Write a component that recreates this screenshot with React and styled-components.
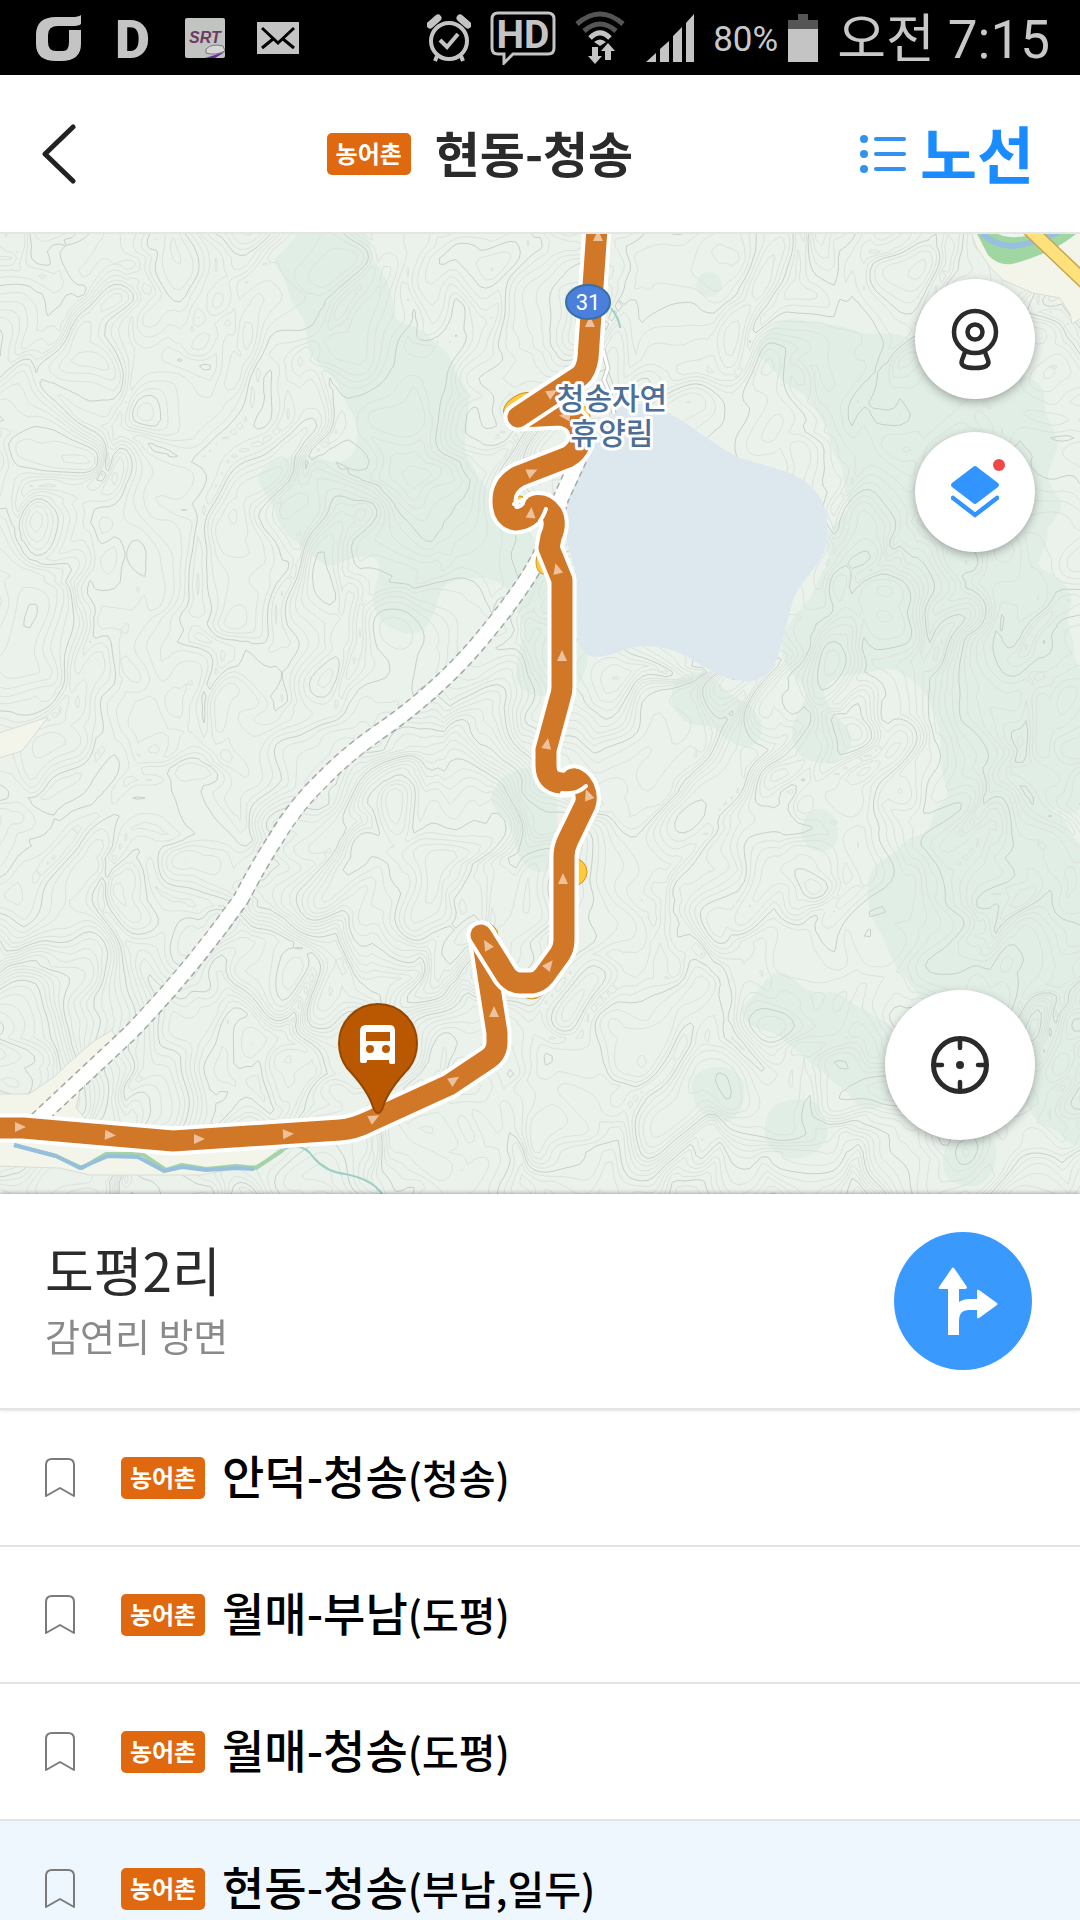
import React, { useMemo } from 'react'
import styled, { createGlobalStyle } from 'styled-components'

const GlobalStyle = createGlobalStyle`
  * {
    box-sizing: border-box;
  }
  body {
    margin: 0;
    background: #fff;
    color: #2b2b2b;
    font-family: 'Noto Sans CJK KR', sans-serif;
  }
  button {
    border: 0;
    padding: 0;
    background: none;
    color: inherit;
    font: inherit;
    cursor: pointer;
  }
  svg {
    display: block;
    flex-shrink: 0;
  }
`

/* ---------- terrain ---------- */

const MAP_W = 1080
const MAP_H = 960
const STEP = 6

const hash = (x, y) => {
  let n = Math.imul(x, 374761393) + Math.imul(y, 668265263) + 1274126177
  n = Math.imul(n ^ (n >>> 13), 1274126177)
  return ((n ^ (n >>> 16)) >>> 0) / 4294967295
}

const noise = (x, y) => {
  const xi = Math.floor(x)
  const yi = Math.floor(y)
  const u = (x - xi) ** 2 * (3 - 2 * (x - xi))
  const v = (y - yi) ** 2 * (3 - 2 * (y - yi))
  const top = hash(xi, yi) * (1 - u) + hash(xi + 1, yi) * u
  const bottom = hash(xi, yi + 1) * (1 - u) + hash(xi + 1, yi + 1) * u
  return (top * (1 - v) + bottom * v) * 2 - 1
}

// wooded zones: x, y, radius
const woods = [
  [330, 20, 60], [350, 80, 50], [380, 140, 50], [430, 170, 50], [410, 220, 45],
  [300, 250, 45], [330, 290, 40], [420, 290, 55], [480, 310, 50], [400, 370, 40],
  [545, 360, 45], [545, 430, 40], [520, 560, 45], [540, 610, 28], [710, 50, 16],
  [790, 110, 40], [850, 140, 60], [920, 180, 70], [1000, 200, 70], [900, 260, 70],
  [990, 320, 80], [860, 350, 55], [950, 410, 60], [830, 410, 45], [700, 460, 35],
  [740, 490, 30], [820, 500, 40], [1040, 420, 60], [1000, 500, 60], [1060, 520, 60],
  [820, 600, 30], [900, 660, 40], [970, 640, 70], [1050, 640, 60], [940, 720, 50],
  [1040, 740, 60], [780, 770, 40], [830, 800, 35], [880, 830, 50], [1060, 850, 60],
  [790, 900, 40], [720, 860, 30], [970, 930, 45],
]

// broad slopes with sharp spurs running across them
const elevation = (x, y) => {
  const wx = x + 16 * noise(x / 46, y / 46 + 9)
  const wy = y + 16 * noise(x / 46 + 31, y / 46)
  const slope = noise(wx / 210 + 3, wy / 210 + 5)
  const spurs = 1 - Math.abs(noise((wx + wy * 0.6) / 52 + 11, (wy - wx * 0.6) / 84))
  const gullies = 1 - Math.abs(noise(wx / 36 + 40, wy / 36 + 7))
  return slope + spurs * 0.42 + gullies * 0.14
}

const woodsAt = (x, y) => {
  let sum = 0
  woods.forEach(([cx, cy, r]) => {
    const d = ((x - cx) ** 2 + (y - cy) ** 2) / (r * r)
    if (d < 5) sum += Math.exp(-d * 1.2)
  })
  return sum
}

function buildTerrain() {
  const cols = MAP_W / STEP + 1
  const rows = MAP_H / STEP + 1
  const h = []
  const g = []
  for (let j = 0; j < rows; j++) {
    for (let i = 0; i < cols; i++) {
      const x = i * STEP
      const y = j * STEP
      const e = elevation(x, y)
      h.push(e)
      g.push(woodsAt(x, y) - 0.5 + noise(x / 30, y / 30) * 0.16 + noise(x / 60 + 8, y / 60) * 0.2)
    }
  }

  const thin = []
  const thick = []
  const green = []
  const gap = 0.06
  const f = (n) => Math.round(n * 10) / 10

  for (let j = 0; j < rows - 1; j++) {
    for (let i = 0; i < cols - 1; i++) {
      const k = j * cols + i
      const idx = [k, k + 1, k + cols + 1, k + cols]
      const px = [i, i + 1, i + 1, i].map((n) => n * STEP)
      const py = [j, j, j + 1, j + 1].map((n) => n * STEP)
      const v = idx.map((n) => h[n])
      const w = idx.map((n) => g[n])

      const from = Math.ceil(Math.min(...v) / gap)
      const to = Math.floor(Math.max(...v) / gap)
      for (let l = from; l <= to; l++) {
        const level = l * gap
        const pts = []
        for (let a = 0; a < 4; a++) {
          const b = (a + 1) % 4
          if (v[a] < level !== v[b] < level) {
            const t = (level - v[a]) / (v[b] - v[a])
            pts.push(`${f(px[a] + (px[b] - px[a]) * t)} ${f(py[a] + (py[b] - py[a]) * t)}`)
          }
        }
        const out = l % 5 === 0 ? thick : thin
        for (let p = 0; p + 1 < pts.length; p += 2) out.push(`M${pts[p]}L${pts[p + 1]}`)
      }

      const poly = []
      for (let a = 0; a < 4; a++) {
        const b = (a + 1) % 4
        if (w[a] > 0) poly.push(`${px[a]} ${py[a]}`)
        if (w[a] > 0 !== w[b] > 0) {
          const t = w[a] / (w[a] - w[b])
          poly.push(`${f(px[a] + (px[b] - px[a]) * t)} ${f(py[a] + (py[b] - py[a]) * t)}`)
        }
      }
      if (poly.length > 2) green.push(`M${poly.join('L')}Z`)
    }
  }
  return { thin: thin.join(''), thick: thick.join(''), green: green.join('') }
}

/* ---------- map ---------- */

const route = [
  'M-20 893L0 894L23 894L173 907L340 896Q354 895 368 888L449 851L488 825Q497 819 497 808L497 799L482 703',
  'M481 701L506 741Q512 749 520 749L532 749Q539 748 544 742L560 720Q564 714 564 706L564 623Q564 614 568 606L585 571Q588 563 584 554Q580 546 573 545',
  'M575 545Q569 550 561 549Q546 548 546 531L546 516L560 464Q562 458 562 453L562 346L549 314L551 303Q557 290 552 280Q545 270 535 272',
  'M537 272Q529 285 516 286Q503 284 503 267Q503 250 519 242L568 223Q580 216 581 203Q580 184 560 181L520 183',
  'M518 183L580 142Q586 137 588 124L598 -20',
]

const arrows = [
  [20, 893, 90], [110, 901, 94], [199, 905, 90], [288, 900, 87], [374, 884, 62],
  [454, 846, 58], [494, 778, 0], [487, 711, -30], [549, 731, 38], [563, 645, 0],
  [588, 561, -20], [547, 510, 10], [562, 422, 0], [557, 335, -15], [531, 279, 5],
  [532, 238, 65], [565, 182, -85], [552, 159, 60], [590, 88, 0], [598, 2, 0],
]

const road =
  'M37 886L130 799Q190 737 241 665Q258 632 275 606Q296 570 324 544Q345 522 376 500Q432 462 475 413Q524 355 540 322Q552 295 561 264L579 225'

const lake =
  'M600 196C590 215 581 225 577 238C566 260 565 285 567 309Q577 335 577 360L578 405Q582 422 595 423C613 423 625 412 645 412C680 413 690 426 710 436Q728 447 747 447C765 447 775 434 779 418L792 370C797 348 820 335 826 312Q830 285 822 267Q812 248 787 238L737 223C710 208 690 190 667 178Q640 164 618 174Z'

function MapDrawing() {
  const terrain = useMemo(buildTerrain, [])

  return (
    <MapSvg viewBox={`0 0 ${MAP_W} ${MAP_H}`} preserveAspectRatio="xMidYMid slice" aria-hidden="true">
      <rect width={MAP_W} height={MAP_H} fill="#ebf2ec" />
      <path d={terrain.green} fill="#e1eee6" stroke="#e1eee6" strokeWidth="1" />
      <path d={terrain.thin} fill="none" stroke="#dce2dd" strokeWidth="1" />
      <path d={terrain.thick} fill="none" stroke="#c8d0ca" strokeWidth="1" />
      <g fill="#f4f5ea" stroke="#d9ddd3" strokeWidth="1">
        <path d="M-4 860L29 860L54 843L72 826L93 808L112 796L116 804L80 856L76 874L90 890L290 905L262 930L200 941L90 941L60 934L-4 932Z" />
        <path d="M-4 500L48 483L22 517L-4 525Z" />
        <path d="M970 -4L977 14L990 33L1003 46L1033 59L1060 64L1070 80L1072 90L1084 82V-4Z" />
      </g>

      {/* river at the bottom left */}
      <path
        d="M14 911L56 922L82 934L106 920L142 920L166 936L182 931L206 935L236 932L256 934L283 916"
        fill="none" stroke="#a3d3a8" strokeWidth="4" strokeLinejoin="round"
      />
      <path
        d="M14 911L56 922L80 934L108 922L138 923L164 937L182 933L206 936L236 934L254 935"
        fill="none" stroke="#95bfdc" strokeWidth="4" strokeLinejoin="round"
      />
      <path
        d="M283 916Q302 906 314 924Q326 938 345 940Q372 945 382 960"
        fill="none" stroke="#9ccfc5" strokeWidth="2"
      />

      {/* river bank and highway at the top right */}
      <path d="M977 0L988 21Q998 32 1012 30Q1044 22 1068 6L1076 0Z" fill="#a0d6a1" />
      <path d="M998 0Q1008 5 1026 2L1032 0Z" fill="#eef5ea" />
      <path d="M982 0Q996 12 1014 12Q1040 8 1058 -2" fill="none" stroke="#99bfe0" strokeWidth="6" />
      <path d="M1026 -8L1090 53" stroke="#c9a64e" strokeWidth="15" />
      <path d="M1026 -8L1090 53" stroke="#ffe17c" strokeWidth="12" />

      <path d={lake} fill="#dce8ee" />
      <path d="M603 116L608 134L604 146L610 160L614 180" fill="none" stroke="#c4c9c6" strokeWidth="5" />
      <path d="M603 116L608 134L604 146L610 160L614 180" fill="none" stroke="#fff" strokeWidth="3" />
      <path d="M611 74Q620 86 620 94" fill="none" stroke="#9ccfc5" strokeWidth="2" />

      <path d={road} fill="none" stroke="#a5aaa6" strokeWidth="17" strokeDasharray="6 4" />
      <path d={road} fill="none" stroke="#fff" strokeWidth="14" />

      <g fill="#ffc83d" stroke="#c99a22" strokeWidth="1">
        <circle cx="573" cy="638" r="14" />
        <ellipse cx="520" cy="171" rx="18" ry="10" transform="rotate(-30 520 171)" />
        <circle cx="520" cy="266" r="4" />
        <ellipse cx="543" cy="328" rx="7" ry="12" />
        <circle cx="532" cy="752" r="13" />
        <circle cx="555" cy="731" r="12" />
        <circle cx="485" cy="702" r="13" />
        <circle cx="579" cy="182" r="11" />
      </g>

      {route.map((d) => (
        <path key={d} d={d} fill="none" stroke="#fff" strokeWidth="29" strokeLinecap="round" strokeLinejoin="round" />
      ))}
      {route.map((d, i) => (
        <g key={d} fill="none" strokeLinecap="round" strokeLinejoin="round">
          {(i === 1 || i === 4) && <path d={d} stroke="#fff" strokeWidth="29" />}
          <path d={d} stroke="#d07728" strokeWidth="21" />
        </g>
      ))}
      <path d="M562 559Q577 561 586 552" fill="none" stroke="#fff" strokeWidth="4" strokeLinecap="round" />
      <path d="M541 293L540 287Q544 281 546 275" fill="none" stroke="#fff" strokeWidth="4" strokeLinecap="round" />
      <path d="M514 270L522 266" fill="none" stroke="#fff" strokeWidth="4" strokeLinecap="round" />

      {arrows.map(([x, y, turn]) => (
        <path
          key={`${x}-${y}`}
          d="M0 -6L5 5L-5 5Z"
          fill="#ecc19c"
          transform={`translate(${x} ${y}) rotate(${turn})`}
        />
      ))}

      <ellipse cx="588" cy="68" rx="22" ry="17" fill="#4a80dc" stroke="#3a6ea6" strokeWidth="2" />
      <RoadNumber x="588" y="76">31</RoadNumber>

      <PlaceName>
        <tspan x="612" y="175">청송자연</tspan>
        <tspan x="612" y="210">휴양림</tspan>
      </PlaceName>

      {/* bus stop pin */}
      <path
        d="M378 879Q375 879 373 873Q368 856 347 834Q339 823 339 809A39 39 0 0 1 417 809Q417 823 409 834Q388 856 383 873Q381 879 378 879Z"
        fill="#b95800" stroke="#954700" strokeWidth="2"
      />
      <path
        fillRule="evenodd" fill="#fff"
        d="M366 791H390Q395 791 395 797V829Q395 830 393 830H391Q389 830 389 828V826H367V827Q367 829 365 829H362Q360 829 360 827V797Q360 791 366 791ZM366 798V807H390V798ZM370 811A4 4 0 1 0 370 819A4 4 0 1 0 370 811ZM386 811A4 4 0 1 0 386 819A4 4 0 1 0 386 811Z"
      />
    </MapSvg>
  )
}

/* ---------- icons ---------- */

const SigmaIcon = () => (
  <svg width="45" height="48" viewBox="0 0 45 48" fill="#c4c4c4">
    <path d="M45 1Q42 3 36 3H20Q0 3 0 21V30Q0 47 20 47H25Q45 47 45 30V16H33V28Q33 37 27 37H20Q12 37 12 28V21Q12 12 22 12H36Q43 12 45 10Z" />
  </svg>
)

const SrtIcon = () => (
  <svg width="40" height="40" viewBox="0 0 40 40">
    <rect width="40" height="40" rx="2" fill="#c2c4c2" />
    <SrtText x="4" y="25">SRT</SrtText>
    <path d="M21 31Q27 25 38 28L40 33Q30 38 21 35Z" fill="#d7d7d7" stroke="#777" strokeWidth="1" />
    <path d="M20 40L40 34L30 40Z" fill="#6b2a94" />
  </svg>
)

const MailIcon = () => (
  <svg width="42" height="32" viewBox="0 0 42 32">
    <rect width="42" height="32" fill="#c4c4c4" />
    <path d="M5 6L21 21L37 6M5 26L16 17M37 26L26 17" fill="none" stroke="#000" strokeWidth="3" />
  </svg>
)

const AlarmIcon = () => (
  <svg width="44" height="48" viewBox="0 0 44 48" fill="none" stroke="#c4c4c4">
    <circle cx="22" cy="27" r="18" strokeWidth="4" />
    <path d="M13 26L20 33L31 20" strokeWidth="4" />
    <path d="M3 11L11 4M41 11L33 4" strokeWidth="7" strokeLinecap="round" />
    <path d="M10 42L8 47M34 42L36 47" strokeWidth="4" />
  </svg>
)

const HdIcon = () => (
  <svg width="66" height="54" viewBox="0 0 66 54">
    <path d="M8 2H58Q64 2 64 8V37Q64 43 58 43H23L14 52V43H8Q2 43 2 37V8Q2 2 8 2Z" fill="none" stroke="#c4c4c4" strokeWidth="3" />
    <HdText x="33" y="37">HD</HdText>
  </svg>
)

const WifiIcon = () => (
  <svg width="50" height="54" viewBox="0 0 50 54" fill="none">
    <path d="M2 13Q25 -7 48 13" stroke="#555" strokeWidth="5" />
    <path d="M9 20Q25 6 41 20" stroke="#555" strokeWidth="5" />
    <path d="M15 27Q25 17 35 27" stroke="#c4c4c4" strokeWidth="5" />
    <path d="M19 31Q25 26 31 31L25 35Z" fill="#c4c4c4" />
    <path d="M17 36H23V45H27L20 53L13 45H17ZM30 49V40H26L33 32L40 40H36V49Z" fill="#c4c4c4" />
  </svg>
)

const SignalIcon = () => (
  <svg width="50" height="48" viewBox="0 0 50 48" fill="#c4c4c4">
    <path d="M2 48L12 39V48ZM16 48V35L25 27V48ZM29 48V22L38 13V48ZM42 48V9L50 0V48Z" />
  </svg>
)

const BatteryIcon = () => (
  <svg width="30" height="48" viewBox="0 0 30 48">
    <path d="M10 0H20V6H30V15H0V6H10Z" fill="#555" />
    <rect y="15" width="30" height="33" fill="#c4c4c4" />
  </svg>
)

const BackIcon = () => (
  <svg width="34" height="60" viewBox="0 0 34 60">
    <path d="M31 3L3 30L31 57" fill="none" stroke="#222" strokeWidth="5" strokeLinecap="round" strokeLinejoin="round" />
  </svg>
)

const ListIcon = () => (
  <svg width="46" height="38" viewBox="0 0 46 38" fill="#3391ef">
    {[4, 19, 34].map((y) => (
      <g key={y}>
        <circle cx="4" cy={y} r="4" />
        <rect x="14" y={y - 2} width="32" height="4" rx="2" />
      </g>
    ))}
  </svg>
)

const CameraIcon = () => (
  <svg width="48" height="64" viewBox="0 -2 48 64" fill="none" stroke="#2b2b2b" strokeLinejoin="round">
    <circle cx="24" cy="23" r="21" strokeWidth="4.5" />
    <circle cx="24" cy="23" r="7.5" strokeWidth="4.5" />
    <path d="M14 43Q13 46 11 51Q8 59 24 59Q40 59 37 51Q35 46 34 43" strokeWidth="4.5" />
  </svg>
)

const LayersIcon = () => (
  <svg width="48" height="54" viewBox="0 0 48 54">
    <path d="M22 2Q24 0 26 2L47 18Q49 20 47 22L26 38Q24 40 22 38L1 22Q-1 20 1 18Z" fill="#3294ff" />
    <path d="M2 33L24 50L46 33" fill="none" stroke="#3294ff" strokeWidth="4.5" strokeLinecap="round" />
  </svg>
)

const LocateIcon = () => (
  <svg width="58" height="58" viewBox="0 0 58 58" fill="none" stroke="#2b2b2b">
    <circle cx="29" cy="29" r="26.5" strokeWidth="5" />
    <path d="M29 4V12M29 46V54M4 29H11M47 29H54" strokeWidth="4.5" strokeLinecap="round" />
    <circle cx="29" cy="29" r="4" fill="#2b2b2b" stroke="none" />
  </svg>
)

const DirectionsIcon = () => (
  <svg width="72" height="68" viewBox="-12 0 72 68" fill="#fff">
    <path d="M13 1Q14 0 15 1L28 20Q28 22 26 22H20V35Q24 32 31 32H38V24Q38 22 40 23L58 36Q59 37 58 38L40 51Q38 52 38 50V43H30Q20 43 20 54V68H9V22H1Q-1 22 0 20Z" />
  </svg>
)

const BookmarkIcon = () => (
  <svg width="30" height="40" viewBox="0 0 30 40">
    <path d="M1 38V7Q1 1 7 1H23Q29 1 29 7V38L15 30Z" fill="none" stroke="#7b7b7b" strokeWidth="2" strokeLinejoin="round" />
  </svg>
)

/* ---------- page ---------- */

const routes = [
  { name: '안덕-청송', via: '(청송)' },
  { name: '월매-부남', via: '(도평)' },
  { name: '월매-청송', via: '(도평)' },
  { name: '현동-청송', via: '(부남,일두)', active: true },
]

const App = () => {
  return (
    <Screen>
      <GlobalStyle />
      <StatusBar>
        <StatusGroup $gap={32}>
          <SigmaIcon />
          <svg width="40" height="64" viewBox="0 0 40 64">
            <DaumText x="2" y="52">D</DaumText>
          </svg>
          <SrtIcon />
          <MailIcon />
        </StatusGroup>
        <StatusGroup $gap={19}>
          <AlarmIcon />
          <HdIcon />
          <WifiIcon />
          <SignalIcon />
          <StatusGroup $gap={10}>
            <Percent>80%</Percent>
            <BatteryIcon />
          </StatusGroup>
          <Clock>오전 7:15</Clock>
        </StatusGroup>
      </StatusBar>

      <Header>
        <BackButton aria-label="뒤로"><BackIcon /></BackButton>
        <TitleBox>
          <Badge>농어촌</Badge>
          <Title>현동-청송</Title>
        </TitleBox>
        <RouteButton><ListIcon /><span>노선</span></RouteButton>
      </Header>

      <MapArea>
        <MapDrawing />
        <MapTools>
          <RoundButton $size={120} aria-label="CCTV"><CameraIcon /></RoundButton>
          <RoundButton $size={120} aria-label="지도 레이어">
            <LayersIcon />
            <Dot />
          </RoundButton>
        </MapTools>
        <LocateBox>
          <RoundButton $size={150} aria-label="현재 위치"><LocateIcon /></RoundButton>
        </LocateBox>
      </MapArea>

      <StopInfo>
        <StopText>
          <StopName>도평2리</StopName>
          <StopDirection>감연리 방면</StopDirection>
        </StopText>
        <DirectionsButton aria-label="길찾기"><DirectionsIcon /></DirectionsButton>
      </StopInfo>

      <RouteList>
        {routes.map((r) => (
          <RouteRow key={r.name + r.via} $active={r.active}>
            <button aria-label={`${r.name} 즐겨찾기`}><BookmarkIcon /></button>
            <RouteLink href="#route">
              <Badge>농어촌</Badge>
              <RouteName>{r.name}<small>{r.via}</small></RouteName>
            </RouteLink>
          </RouteRow>
        ))}
      </RouteList>
    </Screen>
  )
}

export default App

const Screen = styled.div`
  display: flex;
  flex-direction: column;
  height: 100vh;
  overflow: hidden;
`

const StatusBar = styled.div`
  display: flex;
  flex-shrink: 0;
  align-items: center;
  justify-content: space-between;
  height: 75px;
  padding: 0 30px 0 36px;
  background: #000;
  color: #c8c8c8;
`

const StatusGroup = styled.div`
  display: flex;
  align-items: center;
  gap: ${(p) => p.$gap}px;
`

const Percent = styled.span`
  padding-top: 4px;
  font: 400 35px/40px Roboto, sans-serif;
`

const Clock = styled.span`
  padding-top: 4px;
  font: 400 53px/68px Roboto, 'Noto Sans CJK KR', sans-serif;
  white-space: nowrap;
`

const SrtText = styled.text`
  font: italic 700 16px 'Liberation Sans', sans-serif;
  fill: #6d3c60;
`

const DaumText = styled.text`
  font: 900 54px Roboto, sans-serif;
  fill: #c4c4c4;
`

const HdText = styled.text`
  font: 700 39px Roboto, sans-serif;
  fill: #c4c4c4;
  text-anchor: middle;
`

const Header = styled.header`
  display: flex;
  flex-shrink: 0;
  align-items: center;
  justify-content: space-between;
  height: 159px;
  padding: 0 46px 0 42px;
  border-bottom: 2px solid #e4e6e5;
`

const BackButton = styled.button`
  width: 58px;
`

const TitleBox = styled.div`
  display: flex;
  align-items: center;
  gap: 24px;
`

const Title = styled.h1`
  margin: 0;
  padding-bottom: 4px;
  font-size: 49px;
  font-weight: 700;
  line-height: 64px;
`

const Badge = styled.span`
  flex-shrink: 0;
  width: 84px;
  height: 42px;
  border-radius: 5px;
  background: #e0680f;
  color: #fff;
  font-size: 24px;
  font-weight: 700;
  line-height: 40px;
  text-align: center;
`

const RouteButton = styled.button`
  display: flex;
  align-items: center;
  gap: 14px;
  span {
    padding-bottom: 4px;
    color: #1a8cff;
    font-size: 62px;
    font-weight: 700;
    line-height: 80px;
  }
`

const MapArea = styled.main`
  position: relative;
  flex-shrink: 0;
  aspect-ratio: 9 / 8;
  overflow: hidden;
`

const MapSvg = styled.svg`
  width: 100%;
  height: 100%;
`

const RoadNumber = styled.text`
  font: 400 22px 'Liberation Sans Narrow', Roboto, sans-serif;
  fill: #fff;
  text-anchor: middle;
`

const PlaceName = styled.text`
  font: 500 30px 'Noto Sans CJK KR', sans-serif;
  fill: #4b6f96;
  stroke: #fff;
  stroke-width: 6px;
  stroke-linejoin: round;
  paint-order: stroke;
  text-anchor: middle;
`

const MapTools = styled.div`
  position: absolute;
  top: 45px;
  right: 45px;
  display: flex;
  flex-direction: column;
  gap: 33px;
`

const LocateBox = styled.div`
  position: absolute;
  right: 45px;
  bottom: 54px;
`

const RoundButton = styled.button`
  position: relative;
  display: flex;
  align-items: center;
  justify-content: center;
  width: ${(p) => p.$size}px;
  height: ${(p) => p.$size}px;
  border-radius: 50%;
  box-shadow: 0 3px 10px rgba(0, 0, 0, 0.3);
  && {
    background: #fff;
  }
`

const Dot = styled.span`
  position: absolute;
  top: 27px;
  right: 30px;
  width: 12px;
  height: 12px;
  border-radius: 50%;
  background: #f04848;
`

const StopInfo = styled.section`
  position: relative;
  display: flex;
  flex-shrink: 0;
  align-items: center;
  justify-content: space-between;
  height: 216px;
  padding: 0 48px 0 45px;
  border-bottom: 2px solid #e3e4e4;
  box-shadow: 0 -1px 4px rgba(0, 0, 0, 0.3);
  background: #fff;
`

const StopText = styled.div`
  padding-bottom: 4px;
`

const StopName = styled.h2`
  margin: 0;
  font-size: 53px;
  font-weight: 400;
  line-height: 72px;
`

const StopDirection = styled.p`
  margin: 0;
  color: #8a8a8a;
  font-size: 38px;
  line-height: 60px;
`

const DirectionsButton = styled.button`
  display: flex;
  align-items: center;
  justify-content: center;
  width: 138px;
  height: 138px;
  border-radius: 50%;
  && {
    background: #3a99fd;
  }
`

const RouteList = styled.ul`
  flex: 1;
  min-height: 0;
  margin: 0;
  padding: 0;
  overflow-y: auto;
  scrollbar-width: none;
  list-style: none;
`

const RouteRow = styled.li`
  display: flex;
  align-items: center;
  gap: 46px;
  height: 137px;
  padding: 0 45px;
  border-bottom: 2px solid #e3e4e4;
  background: ${(p) => (p.$active ? '#eef7fe' : '#fff')};
`

const RouteLink = styled.a`
  display: flex;
  align-items: center;
  gap: 17px;
  color: #000;
  text-decoration: none;
`

const RouteName = styled.span`
  padding-bottom: 4px;
  font-size: 46px;
  font-weight: 500;
  line-height: 60px;
  small {
    font-size: 40px;
  }
`
